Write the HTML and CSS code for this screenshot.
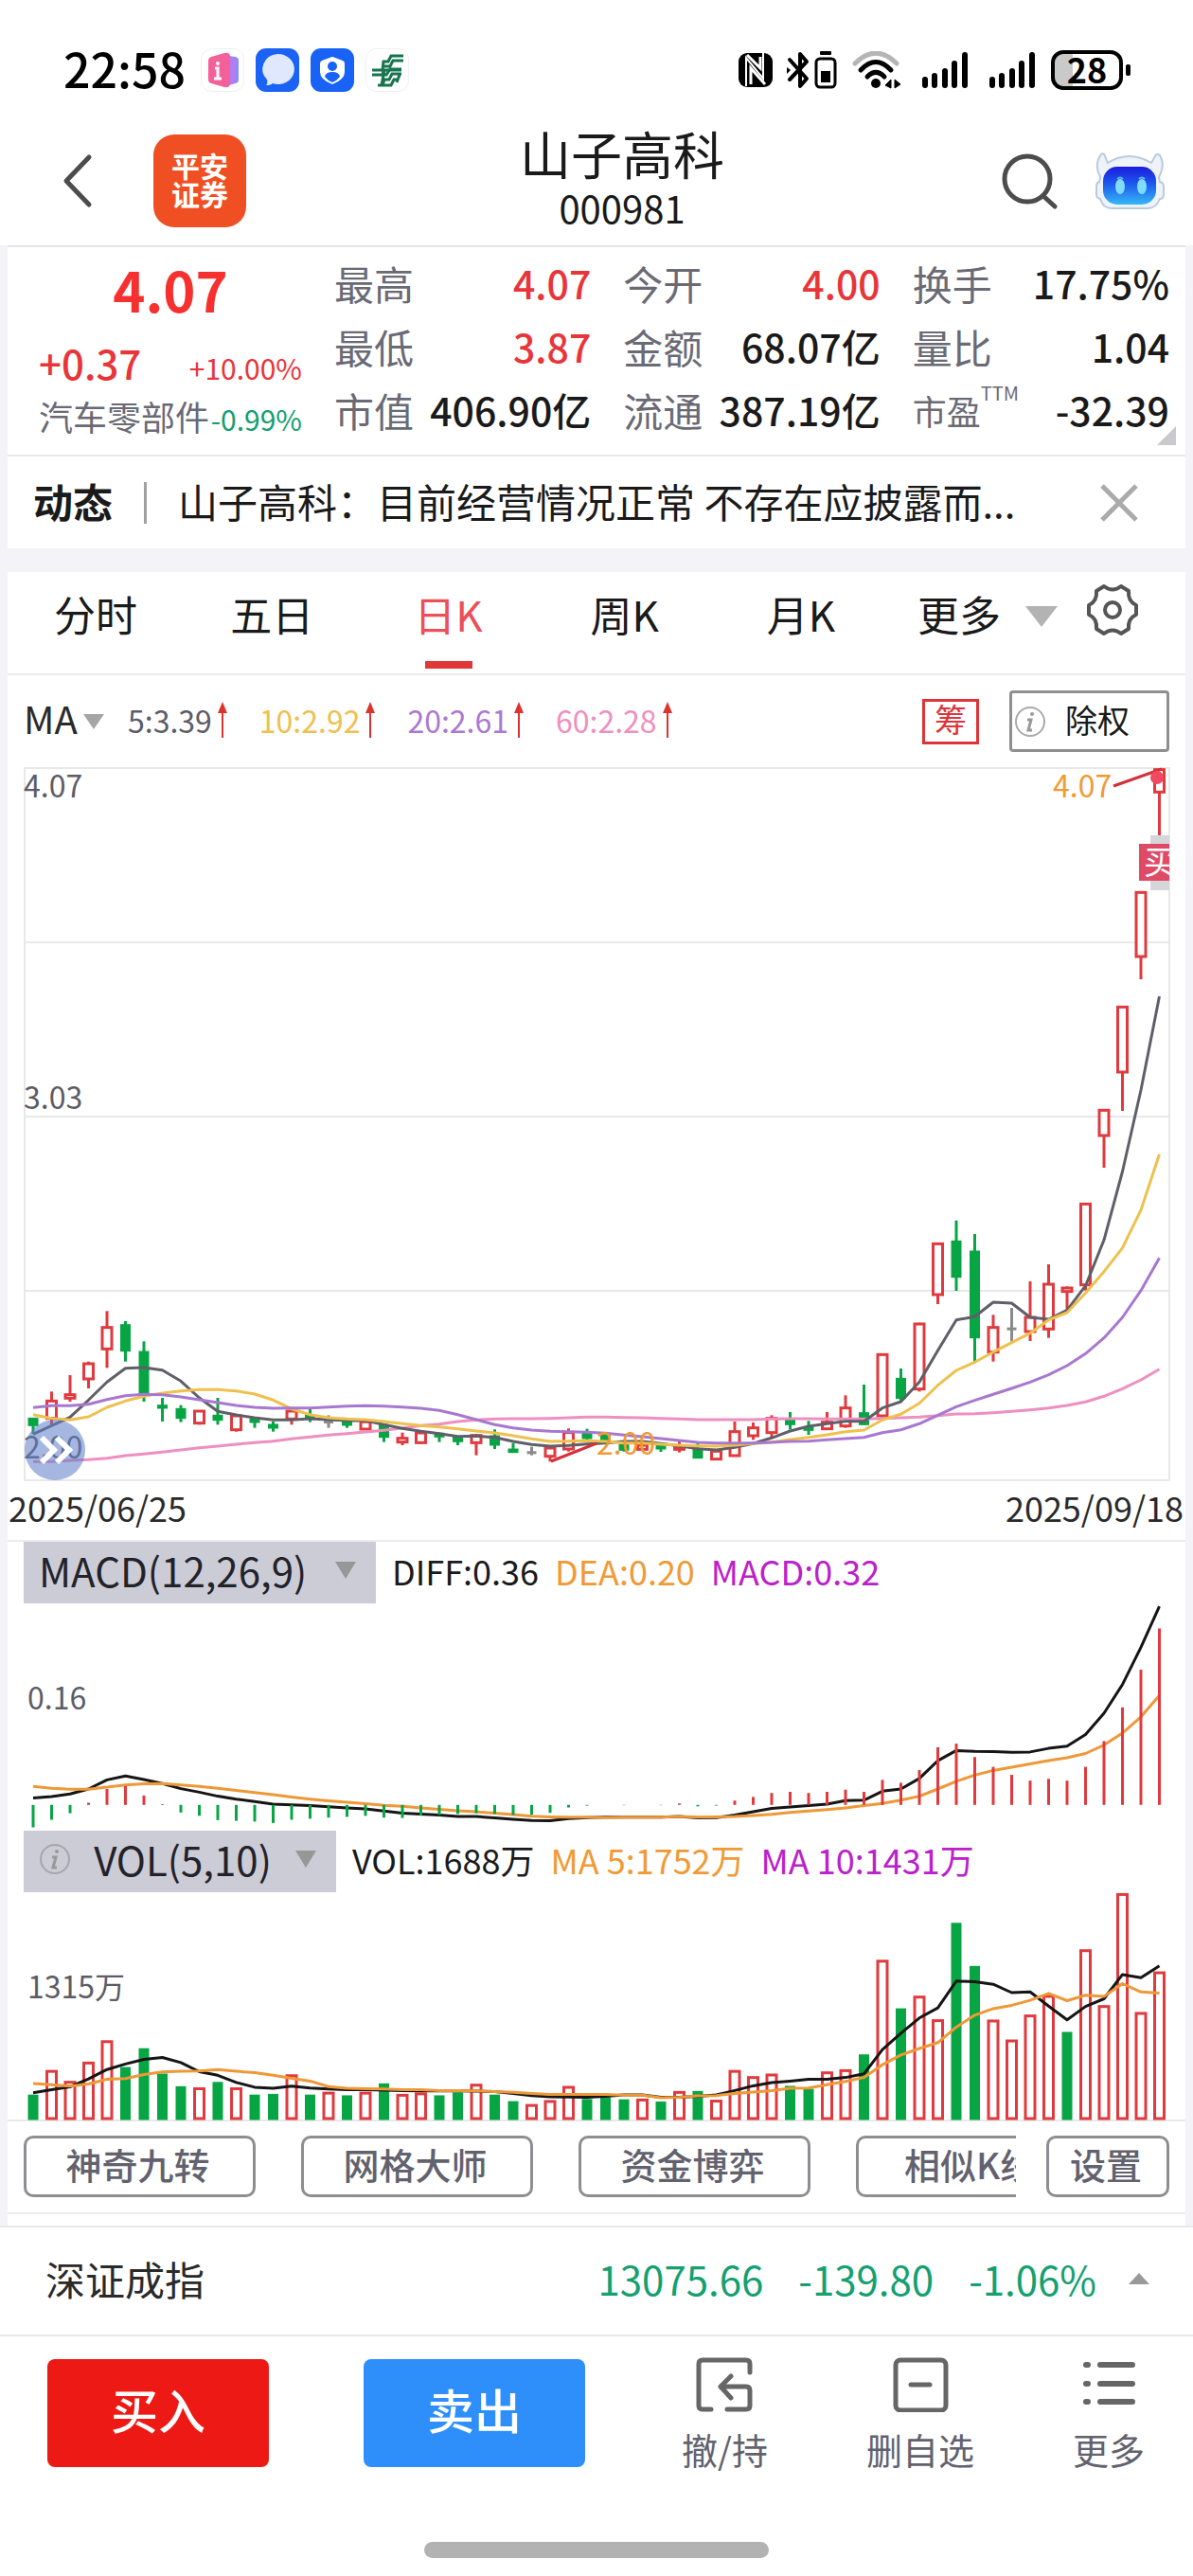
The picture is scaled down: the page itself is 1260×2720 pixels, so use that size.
FILE: index.html
```html
<!DOCTYPE html>
<html lang="zh-CN">
<head>
<meta charset="utf-8">
<meta name="viewport" content="width=device-width, initial-scale=1">
<title>山子高科 000981</title>
<link rel="stylesheet" href="styles.css">
</head>
<body>
<div class="statusbar">
  <div class="status-left">
    <span class="clock">22:58</span>
    <svg class="app-badge" width="46" height="46" viewBox="0 0 46 46"><rect x=".5" y=".5" width="45" height="45" rx="11" fill="#fff" stroke="#f0f0f0"/><path d="M28 8l9 1q3 1 3 4v20q0 3-3 4l-9 2z" fill="#8f8cf8"/><path d="M26 7l7 2q3 1 3 4v21q0 3-3 4l-7 2z" fill="#b57bf0"/><path d="M8 13q0-3 3-4l14-4q6-1 6 4v28q0 5-6 4l-14-4q-3-1-3-4z" fill="#f4609a"/><circle cx="18" cy="16" r="2" fill="#fff"/><path d="M15 21h3v11m-4 0h8" fill="none" stroke="#fff" stroke-width="3"/></svg>
    <svg class="app-badge" width="46" height="46" viewBox="0 0 46 46"><rect width="46" height="46" rx="11" fill="#1a63f5"/><path d="M23 6a17 16 0 1 1-5 31q-2 2-7 2 2-2 1-6A17 16 0 0 1 23 6z" fill="#dfe8fd"/></svg>
    <svg class="app-badge" width="46" height="46" viewBox="0 0 46 46"><rect width="46" height="46" rx="11" fill="#1862f6"/><path d="M23 9q1 0 3 1l8 3q2 1 2 3v9q0 8-13 13-13-5-13-13v-9q0-2 2-3l8-3q2-1 3-1z" fill="#fff"/><circle cx="23" cy="19" r="5" fill="#1862f6"/><path d="M15 30q1-5 8-5t8 5q-3 4-8 6-5-2-8-6z" fill="#1862f6"/></svg>
    <svg class="app-badge" width="46" height="46" viewBox="0 0 46 46"><rect x=".5" y=".5" width="45" height="45" rx="11" fill="#fff" stroke="#f0f0f0"/><path d="M40 8H27l-3 6h-5l-1 9h20M40 13H29l-3 6h-6M7 23h12l-1 6M7 28h15l4-6h12M38 27H28l-3 6h-5l-2 6h9l3-6h4M20 23l-3 16h-4M36 28l-3 8" fill="none" stroke="#17744f" stroke-width="3"/></svg>
  </div>
  <div class="status-right">
    <svg class="snug" width="36" height="38" viewBox="0 0 36 38"><rect y="1" width="36" height="36" rx="9" fill="#000"/><path d="M8 36V6l18 22V1" fill="none" stroke="#fff" stroke-width="2"/><path d="M13 34V17l15 17" fill="none" stroke="#fff" stroke-width="3"/><path d="M9 3l14 14V5" fill="none" stroke="#fff" stroke-width="3"/></svg>
    <svg class="snug" width="54" height="40" viewBox="0 0 54 40"><path d="M3 9l18 20-7 8V3l7 8L3 30" fill="none" stroke="#000" stroke-width="4" stroke-linejoin="round" stroke-linecap="round"/><path d="M0 17l4 3-4 4z"/><rect x="31" y="8" width="20" height="30" rx="4" fill="none" stroke="#000" stroke-width="3"/><rect x="35" y="0" width="12" height="4" rx="1"/><rect x="36" y="21" width="10" height="12"/></svg>
    <svg width="52" height="40" viewBox="0 0 52 40"><path d="M3 13q22-22 44 0" fill="none" stroke="#b5b5b5" stroke-width="5" stroke-linecap="round"/><path d="M9 20q16-17 32 0" fill="none" stroke="#000" stroke-width="5" stroke-linecap="round"/><path d="M16 27q9-9 18 0" fill="none" stroke="#000" stroke-width="5" stroke-linecap="round"/><circle cx="25" cy="34" r="5"/><path d="M35 36l6-6v9zM45 30v9l6-4z" stroke="#000" stroke-width="1"/></svg>
    <svg width="50" height="40" viewBox="0 0 50 40"><path d="M4 30v6M14 26v10M25 21v15M35 13v23M46 4v32" fill="none" stroke="#000" stroke-width="6" stroke-linecap="round"/></svg>
    <svg width="50" height="40" viewBox="0 0 50 40"><path d="M4 30v6M14 26v10M25 21v15M35 13v23M46 4v32" fill="none" stroke="#000" stroke-width="6" stroke-linecap="round"/></svg>
    <div class="battery"><span>28</span></div>
  </div>
</div>

<header class="header">
  <div class="header-left">
    <button class="icon-btn" aria-label="返回"><svg width="32" height="58" viewBox="0 0 32 58"><path d="M28 4L4 29l24 25" fill="none" stroke="#4c4c4c" stroke-width="5" stroke-linecap="round" stroke-linejoin="round"/></svg></button>
    <div class="broker">平安<br>证券</div>
  </div>
  <div class="header-title">
    <h1>山子高科</h1>
    <p>000981</p>
  </div>
  <div class="header-right">
    <button class="icon-btn" aria-label="搜索"><svg width="60" height="60" viewBox="0 0 60 60"><circle cx="27" cy="28" r="24" fill="none" stroke="#4c4c4c" stroke-width="5"/><path d="M44 46l12 11" stroke="#4c4c4c" stroke-width="5" stroke-linecap="round"/></svg></button>
    <button class="icon-btn" aria-label="智能助手"><svg width="74" height="60" viewBox="0 0 74 60"><defs><linearGradient id="face" x1="0" y1="0" x2="0" y2="1"><stop offset="0" stop-color="#1a1cdc"/><stop offset=".45" stop-color="#1d58ee"/><stop offset="1" stop-color="#35b8f5"/></linearGradient></defs><path d="M7 2q3-2 4 2l3 7Q36-3 60 11l4-7q2-4 5-1 6 10-1 23l1 5q4 1 4 5v8q0 5-4 5-4 10-13 10H18Q9 59 6 49q-4-1-4-5v-8q0-4 3-5l1-5Q-1 13 7 2z" fill="#eef3fa" stroke="#b9cbdc" stroke-width="2"/><rect x="9" y="15" width="56" height="40" rx="15" fill="url(#face)"/><ellipse cx="27" cy="36" rx="5" ry="8" fill="#7fdcff"/><ellipse cx="50" cy="36" rx="5" ry="8" fill="#7fdcff"/><path d="M24 28q3-3 6 0M47 28q3-3 6 0" stroke="#5fb4f5" stroke-width="2" fill="none"/></svg></button>
  </div>
</header>

<main class="page">
  <section class="quote">
    <div class="price">
      <div class="price-now">4.07</div>
      <div class="price-change"><span class="chg">+0.37</span><span class="pct">+10.00%</span></div>
      <div class="sector"><span>汽车零部件</span><span class="pct green">-0.99%</span></div>
    </div>
    <dl class="stats">
      <div><dt>最高</dt><dd class="red">4.07</dd></div>
      <div><dt>最低</dt><dd class="red">3.87</dd></div>
      <div><dt>市值</dt><dd>406.90亿</dd></div>
    </dl>
    <dl class="stats">
      <div><dt>今开</dt><dd class="red">4.00</dd></div>
      <div><dt>金额</dt><dd>68.07亿</dd></div>
      <div><dt>流通</dt><dd>387.19亿</dd></div>
    </dl>
    <dl class="stats">
      <div><dt>换手</dt><dd>17.75%</dd></div>
      <div><dt>量比</dt><dd>1.04</dd></div>
      <div><dt class="small">市盈<sup>TTM</sup></dt><dd>-32.39</dd></div>
    </dl>
    <svg class="corner" width="20" height="20" viewBox="0 0 20 20"><path d="M20 0v20H0z" fill="#c9c9ce"/></svg>
  </section>

  <section class="news">
    <strong>动态</strong>
    <span class="news-rule"></span>
    <a href="#news">山子高科：目前经营情况正常 不存在应披露而...</a>
    <button class="icon-btn" aria-label="关闭"><svg width="42" height="42" viewBox="0 0 42 42"><path d="M3 3l36 36M39 3L3 39" stroke="#aaa" stroke-width="5"/></svg></button>
  </section>

  <section class="kline">
    <nav class="tabs">
      <button class="tab">分时</button>
      <button class="tab">五日</button>
      <button class="tab active">日K</button>
      <button class="tab">周K</button>
      <button class="tab">月K</button>
      <button class="tab-more">更多<svg width="34" height="22" viewBox="0 0 34 22"><path d="M0 0h34L17 22z" fill="#b3b3b3"/></svg></button>
      <button class="icon-btn gear" aria-label="设置"><svg width="56" height="56" viewBox="0 0 56 56"><path d="M19 3q9 7 18 0l8 5q-1 11 8 15v10q-9 4-8 15l-8 5q-9-7-18 0l-8-5q1-11-8-15V23q9-4 8-15z" fill="none" stroke="#555" stroke-width="4" stroke-linejoin="round"/><circle cx="28" cy="28" r="8" fill="none" stroke="#555" stroke-width="4"/></svg></button>
    </nav>

    <div class="ma-row">
      <button class="ma-pick">MA<svg width="24" height="18" viewBox="0 0 24 18"><path d="M1 1h22L12 17z" fill="#a5a5a5"/></svg></button>
      <ul class="ma-list">
        <li class="ma5">5:3.39<svg width="10" height="38" viewBox="0 0 10 38"><path d="M5 0l5 12H6v26H4V12H0z" fill="#dd332f"/></svg></li>
        <li class="ma10">10:2.92<svg width="10" height="38" viewBox="0 0 10 38"><path d="M5 0l5 12H6v26H4V12H0z" fill="#dd332f"/></svg></li>
        <li class="ma20">20:2.61<svg width="10" height="38" viewBox="0 0 10 38"><path d="M5 0l5 12H6v26H4V12H0z" fill="#dd332f"/></svg></li>
        <li class="ma60">60:2.28<svg width="10" height="38" viewBox="0 0 10 38"><path d="M5 0l5 12H6v26H4V12H0z" fill="#dd332f"/></svg></li>
      </ul>
      <button class="chips">筹</button>
      <button class="adjust"><svg width="34" height="34" viewBox="0 0 34 34"><circle cx="17" cy="17" r="15" fill="none" stroke="#aaa" stroke-width="2"/><circle cx="19" cy="9" r="2" fill="#999"/><path d="M14 15h4l-3 11h4" fill="none" stroke="#999" stroke-width="3"/></svg><span>除权</span></button>
    </div>

    <svg class="plot" id="price-plot" viewBox="8 809 1244 754" role="img" aria-label="日K线">
      <path class="grid" d="M26 810H1235V1562H26zM26 994H1235M26 1178H1235M26 1362H1235"/>
      <text class="axis" x="25" y="841">4.07</text>
      <text class="axis" x="25" y="1170">3.03</text>
      <text class="axis" x="25" y="1539">2.00</text>
      <g id="candles"></g>
      <g id="averages"></g>
      <text class="mark" x="1112" y="841">4.07</text>
      <text class="mark" x="630" y="1535">2.00</text>
      <path class="leader" d="M1176 829L1227 811M582 1542L630 1523"/>
      <circle cx="1222" cy="820" r="7" fill="#f04a63"/>
      <rect x="1215" y="881" width="20" height="58" fill="#d6d6d9"/>
      <svg x="1203" y="890" width="32" height="39"><rect width="32" height="39" fill="#df4b67"/><text class="flag" x="5" y="32">买</text></svg>
      <g class="expand"><circle cx="58" cy="1530" r="32" fill="#5f7fc8" fill-opacity=".56"/><path d="M44 1517l13 13-13 13M60 1517l13 13-13 13" fill="none" stroke="#fff" stroke-width="6"/></g>
    </svg>
    <div class="dates"><time>2025/06/25</time><time>2025/09/18</time></div>

    <div class="indicator">
      <button class="pick">MACD(12,26,9)<svg width="24" height="20" viewBox="0 0 24 20"><path d="M1 1h22L12 19z" fill="#979797"/></svg></button>
      <span>DIFF:0.36</span><span class="orange">DEA:0.20</span><span class="purple">MACD:0.32</span>
    </div>
    <svg class="plot" id="macd-plot" viewBox="8 1693 1244 240" role="img" aria-label="MACD">
      <text class="axis" x="29" y="1805">0.16</text>
    </svg>

    <div class="indicator">
      <button class="pick vol"><svg width="34" height="34" viewBox="0 0 34 34"><circle cx="17" cy="17" r="15" fill="none" stroke="#a5a5ad" stroke-width="2"/><circle cx="19" cy="9" r="2" fill="#999"/><path d="M14 15h4l-3 11h4" fill="none" stroke="#999" stroke-width="3"/></svg>VOL(5,10)<svg width="24" height="20" viewBox="0 0 24 20"><path d="M1 1h22L12 19z" fill="#979797"/></svg></button>
      <span>VOL:1688万</span><span class="orange">MA 5:1752万</span><span class="purple">MA 10:1431万</span>
    </div>
    <svg class="plot" id="vol-plot" viewBox="8 1998 1244 242" role="img" aria-label="成交量">
      <text class="axis" x="29" y="2110">1315万</text>
      <path class="grid" d="M8 2239H1252"/>
    </svg>

    <div class="tools">
      <div class="tools-scroll">
        <button>神奇九转</button>
        <button>网格大师</button>
        <button>资金博弈</button>
        <button>相似K线</button>
      </div>
      <button class="tools-set">设置</button>
    </div>
  </section>
</main>

<footer class="footer">
  <div class="index-bar">
    <span class="index-name">深证成指</span>
    <span>13075.66</span><span>-139.80</span><span>-1.06%</span>
    <svg width="22" height="12" viewBox="0 0 22 12"><path d="M11 0l11 12H0z" fill="#999"/></svg>
  </div>
  <div class="actions">
    <button class="trade buy">买入</button>
    <button class="trade sell">卖出</button>
    <div class="acts">
      <button class="act"><svg width="60" height="58" viewBox="0 0 60 58"><path d="M57 16V7q0-4-4-4H7Q3 3 3 7v44q0 4 4 4h9M33 55h20q4 0 4-4V35q0-4-4-4H27M37 20L26 31l11 12" fill="none" stroke="#666" stroke-width="5" stroke-linecap="round" stroke-linejoin="round"/></svg>撤/持</button>
      <button class="act"><svg width="60" height="58" viewBox="0 0 60 58"><rect x="4" y="3" width="53" height="53" rx="5" fill="none" stroke="#666" stroke-width="5"/><path d="M20 29h20" stroke="#666" stroke-width="5" stroke-linecap="round"/></svg>删自选</button>
      <button class="act"><svg width="60" height="58" viewBox="0 0 60 58"><path d="M6 8h2M21 8h34M6 28h2M21 28h34M6 47h2M21 47h34" stroke="#666" stroke-width="6" stroke-linecap="round"/></svg>更多</button>
    </div>
  </div>
  <div class="home-bar"></div>
</footer>
<script src="chart.js"></script>
</body>
</html>
```
FILE: styles.css
```css
* { box-sizing: border-box; }

body {
  margin: 0;
  background: #fff;
  color: #1a1a1a;
  font-family: "Noto Sans CJK SC", "Noto Sans", sans-serif;
  font-size: 42px;
  line-height: 1;
}

button {
  margin: 0;
  padding: 0;
  border: 0;
  background: none;
  color: inherit;
  font: inherit;
  white-space: nowrap;
}

svg { display: block; flex: none; }
h1, p, ul, dl, dd { margin: 0; padding: 0; }
a { color: inherit; text-decoration: none; }

.icon-btn { display: flex; align-items: center; justify-content: center; }
.red { color: #e8353a; }
.green { color: #14a070; }
.orange { color: #f09a35; }
.purple { color: #bb20cc; }

/* Status bar */
.statusbar {
  display: flex;
  justify-content: space-between;
  align-items: center;
  height: 148px;
  padding: 0 66px 0 67px;
}
.status-left, .status-right { display: flex; align-items: center; }
.status-left { gap: 12px; }
.status-right { gap: 21px; }
.snug { margin-right: -6px; }
.clock {
  margin-right: 4px;
  color: #000;
  font-size: 50px;
  font-weight: 500;
  line-height: 60px;
  padding-bottom: 6px;
}
.battery {
  position: relative;
  display: flex;
  align-items: center;
  justify-content: center;
  width: 76px;
  height: 42px;
  margin-right: 8px;
  margin-left: -5px;
  border: 4px solid #000;
  border-radius: 13px;
  background: linear-gradient(90deg, #c9c9c9 28%, #fff 28%);
  color: #000;
  font-size: 36px;
  font-weight: 700;
  line-height: 32px;
}
.battery span { padding-bottom: 4px; }
.battery::after {
  content: "";
  position: absolute;
  right: -12px;
  top: 11px;
  width: 5px;
  height: 12px;
  border-radius: 2px;
  background: #000;
}

/* Header */
.header { display: flex; height: 111px; }
.header-left, .header-right { display: flex; height: 86px; align-items: center; }
.header-left { width: 260px; padding-left: 66px; justify-content: space-between; }
.header-right { width: 206px; padding-left: 4px; gap: 38px; }
.broker {
  display: flex;
  align-items: center;
  justify-content: center;
  width: 98px;
  height: 98px;
  border-radius: 22px;
  background: #f04f23;
  color: #fff;
  font-size: 30px;
  font-weight: 700;
  line-height: 30px;
  padding-bottom: 4px;
}
.header-title { flex: 1; text-align: center; }
.header-title h1 { font-size: 54px; font-weight: 400; line-height: 64px; margin-top: -18px; }
.header-title p { font-size: 40px; line-height: 50px; }

/* Quote */
.page { padding: 0 8px; background: #f3f3f8; }
.quote {
  position: relative;
  display: grid;
  grid-template-columns: 278px 1fr 1fr 1fr;
  column-gap: 34px;
  padding: 4px 17px 14px 33px;
  border-top: 2px solid #e4e4e6;
  border-bottom: 2px solid #e8e8ea;
  background: #fff;
}
.price-now { color: #f5302f; font-size: 58px; font-weight: 700; line-height: 80px; text-align: center; }
.price-change { display: flex; justify-content: space-between; align-items: baseline; padding-top: 8px; color: #e8353a; line-height: 60px; }
.chg { font-weight: 500; }
.pct { font-size: 30px; }
.sector { display: flex; align-items: baseline; justify-content: space-between; color: #6a6a75; font-size: 36px; line-height: 42px; }
.stats div { display: flex; justify-content: space-between; align-items: center; height: 67px; }
.stats dt { color: #6a6a75; }
.stats dt.small { font-size: 36px; }
.stats sup { font-size: 20px; line-height: 0; vertical-align: 26px; }
.stats dd { font-size: 41px; font-weight: 500; }
.corner { position: absolute; right: 10px; bottom: 10px; }

.news { display: flex; align-items: center; height: 97px; padding: 0 49px 0 27px; background: #fff; }
.news strong { font-weight: 700; line-height: 60px; padding-bottom: 4px; }
.news-rule { width: 3px; height: 44px; margin: 0 33px; background: #a0a0a0; }
.news a { flex: 1; overflow: hidden; line-height: 60px; white-space: nowrap; padding-bottom: 4px; }

/* K line panel */
.kline { margin-top: 25px; background: #fff; padding-bottom: 12px; }
.tabs { display: flex; height: 109px; border-bottom: 2px solid #ececee; font-size: 44px; }
.tab { position: relative; flex: 186; padding-bottom: 20px; }
.tab.active { color: #ec4f58; }
.tab.active::after {
  content: "";
  position: absolute;
  left: 50%;
  bottom: 5px;
  width: 50px;
  height: 8px;
  margin-left: -25px;
  background: #e23737;
}
.tab-more { display: flex; align-items: center; gap: 26px; padding: 0 0 20px 30px; }
.tab-more svg { margin-top: 6px; }
.gear { padding: 0 49px 28px 30px; }

.ma-row { display: flex; align-items: center; height: 97px; padding: 0 17px; font-size: 32px; }
.ma-pick { display: flex; align-items: center; gap: 5px; width: 110px; font-size: 40px; color: #2a2a2a; padding-bottom: 8px; }
.ma-pick svg { margin-top: 8px; }
.ma-list { display: flex; flex: 1; gap: 34px; list-style: none; line-height: 38px; padding-bottom: 4px; }
.ma-list li { display: flex; align-items: center; gap: 6px; }
.ma5 { color: #5c5c66; }
.ma10 { color: #eec050; }
.ma20 { color: #ab78d2; }
.ma60 { color: #ee8fc0; }
.chips { width: 60px; height: 48px; border: 3px solid #e03338; color: #e03338; font-size: 34px; line-height: 36px; padding-bottom: 6px; }
.adjust {
  display: flex;
  align-items: center;
  gap: 20px;
  width: 169px;
  height: 65px;
  margin-left: 32px;
  padding-left: 2px;
  border: 3px solid #8f8f8f;
  border-radius: 4px;
  font-size: 34px;
}
.adjust span { padding-bottom: 4px; }

.plot { width: 100%; height: auto; }
.grid { fill: none; stroke: #e8e8ea; stroke-width: 2; }
.axis { fill: #5c5c66; font-size: 32px; }
.mark { fill: #f09a35; font-size: 32px; }
.flag { fill: #fff; font-size: 34px; }
.leader { fill: none; stroke: #d5303a; stroke-width: 3; }
.up { fill: #fff; stroke: #e03a3e; stroke-width: 3; }
.down { fill: #07a544; stroke: #07a544; stroke-width: 3; }
.flat { fill: #8a8a8a; stroke: #8a8a8a; stroke-width: 2; }
.line { fill: none; stroke-width: 3; stroke-linejoin: round; }
.dates { display: flex; justify-content: space-between; height: 64px; padding: 0 2px 0 1px; border-bottom: 2px solid #ececee; font-size: 36px; line-height: 54px; color: #2a2a2a; }

.indicator { display: flex; align-items: center; gap: 17px; height: 65px; padding-left: 17px; font-size: 36px; }
.indicator span { white-space: nowrap; padding-bottom: 6px; }
.pick {
  display: flex;
  align-items: center;
  justify-content: space-between;
  width: 372px;
  height: 65px;
  padding: 0 20px 6px 16px;
  background: #ccccd6;
  color: #22222a;
  font-size: 42px;
}
.pick.vol { width: 330px; }

.tools { display: flex; gap: 32px; height: 98px; padding: 15px 17px 0; border-bottom: 2px solid #ececee; }
.tools-scroll { display: flex; flex: 1; min-width: 0; gap: 48px; overflow: hidden; }
.tools button {
  flex: none;
  width: 245px;
  height: 65px;
  border: 3px solid #8e8e92;
  border-radius: 10px;
  color: #62626e;
  font-size: 38px;
  font-weight: 500;
  padding: 0 4px 6px 0;
}
.tools .tools-set { width: 130px; }

/* Footer */
.index-bar {
  display: flex;
  align-items: center;
  gap: 37px;
  height: 117px;
  padding: 0 46px 6px 48px;
  border-top: 2px solid #e8e8ea;
  border-bottom: 2px solid #e8e8ea;
  color: #14a070;
}
.index-bar svg { margin-left: -3px; }
.index-name { flex: 1; color: #2a2a2a; }
.actions { display: flex; align-items: flex-start; height: 217px; padding: 24px 51px 0 50px; }
.trade { flex: none; width: 234px; height: 114px; border-radius: 8px; color: #fff; font-size: 50px; font-weight: 500; padding-bottom: 10px; }
.buy { background: #ed1915; }
.sell { margin: 0 102px 0 100px; background: #2e8ffa; }
.acts { display: flex; flex: 1; justify-content: space-between; margin-top: -2px; }
.act { display: flex; flex-direction: column; align-items: center; gap: 20px; color: #62626e; font-size: 38px; }
.home-bar { width: 364px; height: 17px; margin: 0 auto 19px; border-radius: 9px; background: #b2b2b2; }
```
FILE: chart.js
```js
const NS = "http://www.w3.org/2000/svg";
const FIRST_X = 35;
const STEP = 19.5;
const COLORS = { black: "#151515", orange: "#ee9838", red: "#e03a3e", green: "#07a544" };

function add(parent, tag, attrs) {
  const node = document.createElementNS(NS, tag);
  for (const key in attrs) node.setAttribute(key, attrs[key]);
  parent.appendChild(node);
  return node;
}
const xAt = (i) => FIRST_X + i * STEP;

function line(parent, values, color) {
  const points = values.map((y, i) => `${xAt(i)},${y.toFixed(1)}`).join(" ");
  add(parent, "polyline", { class: "line", points, stroke: color });
}

function box(parent, i, top, bottom, kind) {
  const up = kind === "up";
  const height = Math.max(bottom - top, 1);
  const half = up ? 5 : 4;
  add(parent, "rect", { class: kind, x: xAt(i) - half, y: top, width: half * 2, height });
}

// Each candle: kind, high, body top, body bottom, low.
const early = `d470,472,490,520 u385,415,470,490 u333,395,406,417 u290,297,345,375 u130,182,250,310
d162,176,254,290 d226,261,390,417 d405,431,435,480 d428,442,467,482 u445,447,485,490 d405,463,473,490
u460,462,506,512 d470,474,480,500 d480,492,498,512 u445,447,472,490 d440,462,466,482 f460,480,480,500
d475,480,489,500 u475,481,504,506 d487,493,527,545 u515,533,545,555 u512,516,547,550 d515,520,526,545
d528,532,541,555 u520,524,547,587 d505,528,552,567 d548,570,575,577 f560,577,577,587 u560,564,590,607
u502,515,567,575 d503,520,531,545`;
const late = `d815,825,835,840 d850,855,868,875 u850,855,868,870 d855,858,864,876 u843,860,868,878 d848,868,893,897
u870,874,899,902 u780,812,888,890 u783,800,825,838 u760,770,815,833 d750,776,787,805 d778,802,805,822
u750,782,803,805 u697,737,794,800 d663,755,787,791 u565,568,762,767 d612,646,704,715 u467,471,677,685
u213,217,378,408 d143,211,320,366 d186,243,512,595 u442,482,560,590 f420,485,486,527 u336,450,495,525
u282,345,487,515 u352,357,368,425 u87,91,347,365 u-210,-206,-126,-24 u-537,-533,-327,-204
u-900,-896,-693,-621 u-1290,-1285,-1214,-1074`;
const parse = (text, origin) => text.trim().split(/\s+/).map((item) => ({
  kind: { u: "up", d: "down", f: "flat" }[item[0]],
  y: item.slice(1).split(",").map((v) => origin + v / 3)
}));
const candles = [...parse(early, 1340), ...parse(late, 1240)];
const candleLayer = document.getElementById("candles");
candles.forEach(({ kind, y }, i) => {
  const stroke = { up: COLORS.red, down: COLORS.green, flat: "#8a8a8a" }[kind];
  add(candleLayer, "path", { d: `M${xAt(i)} ${y[0]}V${y[3]}M${xAt(i)} ${y[1]}V${y[4]}`, stroke, "stroke-width": 3 });
  box(candleLayer, i, y[1], y[2], kind);
});

const join = (a, b) => [...a.map((v) => 1340 + v / 3), ...b.map((v) => 1240 + v / 3)];
const averages = document.getElementById("averages");
line(averages, join(
  [607,607,603,601,596,588,583,577,570,563,558,552,547,542,535,529,523,518,513,508,501,493,488,480,475,472,471,471,470,468,466],
  [766,767,768,770,772,774,774,774,774,772,771,771,772,772,772,770,768,766,761,756,755,752,748,743,737,729,718,700,676,648,614]), "#ee8fc0");
line(averages, join(
  [520,493,466,412,355,311,309,317,352,405,448,459,468,475,475,471,474,477,477,490,502,511,518,527,526,530,543,553,558,556,551],
  [848,843,843,850,857,866,870,862,850,832,810,795,787,779,779,737,717,655,555,458,448,402,405,450,456,427,350,205,-12,-270,-567]), "#5f5f69");
line(averages, join(
  [458,470,475,465,435,415,400,390,383,379,379,383,393,412,440,458,468,472,474,480,487,493,497,503,510,516,525,535,543,542,541],
  [843,848,848,852,855,857,858,855,850,845,837,830,822,812,807,775,757,722,665,618,592,560,530,500,458,435,373,305,230,110,-67]), "#efc04d");
line(averages, join(
  [436,430,430,425,410,398,394,395,402,411,420,429,435,438,437,437,434,431,430,431,434,438,445,458,474,490,500,507,511,512,514],
  [817,823,828,834,840,846,848,848,848,846,843,842,838,834,830,815,806,787,760,733,713,694,675,655,632,603,565,515,450,365,262]), "#a878d0");

const lower = (v) => 1680 + v / 2.613;

const macd = document.getElementById("macd-plot");
const diff = [571,567,560,546,521,510,520,531,545,555,566,574,581,588,590,592,595,598,601,607,613,615,618,622,622,626,630,633,634,628,625,
  624,624,624,624,622,626,625,618,609,600,596,592,588,578,577,552,546,517,468,440,442,443,445,444,434,428,396,337,258,155,42];
const dea = [539,544,547,547,541,535,532,531,535,539,544,550,556,562,568,574,579,583,587,591,594,598,602,606,609,613,617,621,623,624,624,
  625,624,624,624,622,624,623,622,619,616,611,607,603,598,592,586,577,566,546,525,508,495,486,477,468,460,448,425,392,347,288];
const bars = [652,631,613,584,546,538,564,588,611,620,632,634,636,640,631,628,625,623,620,625,626,620,618,615,613,615,618,617,612,597,592,
  590,591,590,591,586,594,592,578,568,557,554,557,554,548,554,521,529,494,431,421,458,485,507,523,518,523,485,414,321,217,103];
line(macd, diff.map(lower), COLORS.black);
line(macd, dea.map(lower), COLORS.orange);
bars.forEach((v, i) => add(macd, "path", {
  d: `M${xAt(i)} ${lower(590)}V${lower(v)}`, stroke: v > 590 ? COLORS.green : COLORS.red, "stroke-width": 3
}));

const vol = document.getElementById("vol-plot");
const volumes = [-1388,1320,1350,1297,1238,-1312,-1260,-1330,-1365,1368,-1353,1368,-1388,-1386,1332,-1388,1380,-1390,1380,-1357,1386,1382,
  -1390,-1382,1358,-1388,-1406,1414,1403,1364,-1400,-1395,-1401,1399,-1407,1378,-1378,1402,1320,1337,1330,-1364,-1372,1324,1318,-1277,
  1016,-1150,1115,1180,-914,-1033,1181,1236,1167,1113,-1215,987,1141,832,1160,1048];
volumes.forEach((v, i) => box(vol, i, lower(Math.abs(v)) + 2, 2237, v < 0 ? "down" : "up"));
line(vol, [1384,1376,1368,1346,1320,1305,1292,1287,1301,1326,1336,1356,1369,1372,1366,1371,1374,1376,1376,1377,1378,1379,1379,1379,1380,
  1381,1386,1392,1395,1396,1397,1394,1390,1390,1397,1397,1394,1390,1378,1365,1356,1352,1347,1347,1342,1332,1265,1220,1178,1150,1076,1078,
  1085,1108,1106,1145,1183,1146,1125,1058,1067,1034].map(lower), COLORS.black);
line(vol, [1359,1362,1366,1360,1347,1345,1334,1327,1325,1324,1320,1325,1329,1336,1344,1352,1367,1372,1373,1374,1376,1376,1378,1378,1379,
  1381,1383,1386,1389,1389,1389,1389,1391,1391,1398,1397,1393,1392,1386,1382,1378,1372,1371,1362,1353,1342,1307,1280,1262,1246,1203,1170,
  1152,1143,1129,1110,1130,1115,1118,1083,1106,1109].map(lower), COLORS.orange);
```
